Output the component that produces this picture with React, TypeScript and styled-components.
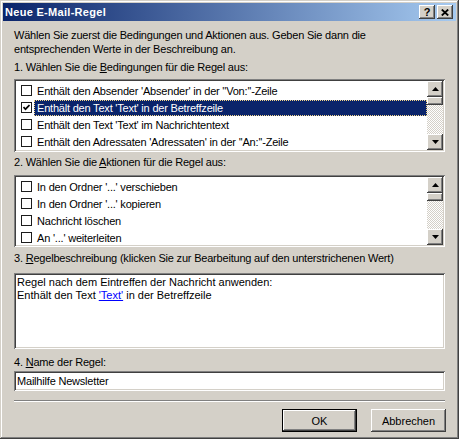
import React from "react";
import styled, { createGlobalStyle } from "styled-components";

const GlobalStyle = createGlobalStyle`
  html, body {
    margin: 0;
    padding: 0;
    background: #d4d0c8;
  }
  body {
    font-family: "Liberation Sans", Arial, sans-serif;
    font-size: 11px;
    color: #000;
  }
`;

const raised = "inset -1px -1px #404040, inset 1px 1px #fff, inset -2px -2px #808080";
const sunken = "inset 1px 1px #808080, inset -1px -1px #fff, inset 2px 2px #404040, inset -2px -2px #d4d0c8";

const WindowStyled = styled.div`
  width: 459px;
  height: 439px;
  box-sizing: border-box;
  padding: 3px;
  background: #d4d0c8;
  box-shadow: inset -1px -1px #404040, inset 1px 1px #d4d0c8, inset -2px -2px #808080, inset 2px 2px #fff;
  display: flex;
  flex-direction: column;
`;

const TitleBar = styled.div`
  height: 18px;
  display: flex;
  align-items: center;
  justify-content: space-between;
  padding: 0 3px 0 2px;
  background: linear-gradient(to right, #0a246a, #a6caf0);
`;

const TitleText = styled.span`
  color: #fff;
  font-weight: bold;
  font-size: 11px;
  letter-spacing: 0.3px;
`;

const CaptionButtons = styled.div`
  display: flex;
  gap: 2px;
`;

const CaptionButton = styled.div`
  width: 16px;
  height: 14px;
  background: #d4d0c8;
  box-shadow: ${raised};
  display: flex;
  align-items: center;
  justify-content: center;
  font-weight: bold;
  font-size: 11px;
  line-height: 14px;
`;

const Body = styled.div`
  display: flex;
  flex-direction: column;
  padding: 0 11px;
  letter-spacing: -0.2px;
`;

const Intro = styled.p`
  margin: 7px 0 0;
  line-height: 14px;
  white-space: nowrap;
`;

const Label = styled.div<{ $mt: number }>`
  margin-top: ${(p) => p.$mt}px;
  line-height: 14px;
  height: 14px;
  white-space: nowrap;
`;

const Mnemonic = styled.span`
  text-decoration: underline;
`;

const ListBox = styled.div<{ $mt: number; $h: number }>`
  margin-top: ${(p) => p.$mt}px;
  height: ${(p) => p.$h}px;
  box-sizing: border-box;
  padding: 2px;
  background: #fff;
  box-shadow: ${sunken};
  display: flex;
  overflow: hidden;
`;

const Items = styled.div`
  flex: 1;
  padding-top: 1px;
  overflow: hidden;
`;

const Row = styled.div`
  height: 17px;
  display: flex;
  align-items: center;
  padding-left: 5px;
  white-space: nowrap;
`;

const CheckBox = styled.span`
  width: 11px;
  height: 11px;
  box-sizing: border-box;
  border: 1px solid #1c1c1c;
  background: #fff;
  display: flex;
  align-items: center;
  justify-content: center;
  flex: none;
`;

const ItemText = styled.span<{ $selected?: boolean }>`
  margin-left: 2px;
  padding: 0 3px;
  height: 16px;
  line-height: 16px;
  box-sizing: border-box;
  flex: ${(p) => (p.$selected ? 1 : "none")};
  background: ${(p) => (p.$selected ? "#0a246a" : "transparent")};
  color: ${(p) => (p.$selected ? "#fff" : "#000")};
  outline: ${(p) => (p.$selected ? "1px dotted #f3d68a" : "none")};
  outline-offset: -1px;
`;

const ScrollBar = styled.div`
  width: 16px;
  display: flex;
  flex-direction: column;
  flex: none;
`;

const ScrollButton = styled.div`
  height: 16px;
  flex: none;
  background: #d4d0c8;
  box-shadow: ${raised};
  display: flex;
  align-items: center;
  justify-content: center;
`;

const Thumb = styled.div`
  height: 8px;
  flex: none;
  background: #d4d0c8;
  box-shadow: ${raised};
`;

const Track = styled.div`
  flex: 1;
  background-color: #d4d0c8;
  background-image: conic-gradient(#fff 25%, #d4d0c8 0 50%, #fff 0 75%, #d4d0c8 0);
  background-size: 2px 2px;
`;

const DescBox = styled.div`
  margin-top: 8px;
  height: 76px;
  box-sizing: border-box;
  padding: 3px 3px;
  background: #fff;
  box-shadow: ${sunken};
  line-height: 13px;
  white-space: nowrap;
  letter-spacing: 0;
`;

const LinkValue = styled.span`
  color: #0000ff;
  text-decoration: underline;
`;

const TextInput = styled.div`
  margin-top: 2px;
  height: 20px;
  box-sizing: border-box;
  padding: 0 3px;
  background: #fff;
  box-shadow: ${sunken};
  line-height: 20px;
`;

const Separator = styled.div`
  margin-top: 9px;
  height: 2px;
  border-top: 1px solid #808080;
  border-bottom: 1px solid #fff;
  box-sizing: border-box;
`;

const ButtonRow = styled.div`
  margin-top: 7px;
  display: flex;
  justify-content: flex-end;
  gap: 14px;
  margin-right: -1px;
`;

const DialogButton = styled.div<{ $default?: boolean }>`
  width: 75px;
  height: 23px;
  background: #d4d0c8;
  display: flex;
  align-items: center;
  justify-content: center;
  letter-spacing: 0;
  box-shadow: ${(p) =>
    p.$default
      ? "inset 0 0 0 1px #000, inset -2px -2px #404040, inset 2px 2px #fff, inset -3px -3px #808080"
      : raised};
`;

const UpArrow = () => (
  <svg width="7" height="4" viewBox="0 0 7 4">
    <path d="M3.5 0 L7 4 L0 4 Z" fill="#000" />
  </svg>
);

const DownArrow = () => (
  <svg width="7" height="4" viewBox="0 0 7 4">
    <path d="M0 0 L7 0 L3.5 4 Z" fill="#000" />
  </svg>
);

const CheckMark = () => (
  <svg width="7" height="7" viewBox="0 0 7 7">
    <polyline points="0.5,3 2.5,5.2 6.5,1" fill="none" stroke="#000" strokeWidth="1.7" />
  </svg>
);

const CloseGlyph = () => (
  <svg width="8" height="7" viewBox="0 0 8 7">
    <path d="M0.8 0.5 L7.2 6.5 M7.2 0.5 L0.8 6.5" stroke="#000" strokeWidth="1.8" />
  </svg>
);

const Scroller: React.FC = () => (
  <ScrollBar>
    <ScrollButton>
      <UpArrow />
    </ScrollButton>
    <Thumb />
    <Track />
    <ScrollButton>
      <DownArrow />
    </ScrollButton>
  </ScrollBar>
);

type Item = { text: string; checked?: boolean; selected?: boolean };

const conditions: Item[] = [
  { text: "Enthält den Absender 'Absender' in der ''Von:''-Zeile" },
  { text: "Enthält den Text 'Text' in der Betreffzeile", checked: true, selected: true },
  { text: "Enthält den Text 'Text' im Nachrichtentext" },
  { text: "Enthält den Adressaten 'Adressaten' in der ''An:''-Zeile" },
];

const actions: Item[] = [
  { text: "In den Ordner '...' verschieben" },
  { text: "In den Ordner '...' kopieren" },
  { text: "Nachricht löschen" },
  { text: "An '...' weiterleiten" },
];

const CheckList: React.FC<{ items: Item[]; mt: number; h: number }> = ({ items, mt, h }) => (
  <ListBox $mt={mt} $h={h}>
    <Items>
      {items.map((item) => (
        <Row key={item.text}>
          <CheckBox>{item.checked && <CheckMark />}</CheckBox>
          <ItemText $selected={item.selected}>{item.text}</ItemText>
        </Row>
      ))}
    </Items>
    <Scroller />
  </ListBox>
);

const App: React.FC = () => (
  <>
    <GlobalStyle />
    <WindowStyled>
      <TitleBar>
        <TitleText>Neue E-Mail-Regel</TitleText>
        <CaptionButtons>
          <CaptionButton>?</CaptionButton>
          <CaptionButton>
            <CloseGlyph />
          </CaptionButton>
        </CaptionButtons>
      </TitleBar>
      <Body>
        <Intro>
          Wählen Sie zuerst die Bedingungen und Aktionen aus. Geben Sie dann die
          <br />
          entsprechenden Werte in der Beschreibung an.
        </Intro>
        <Label $mt={4}>
          1. Wählen Sie die <Mnemonic>B</Mnemonic>edingungen für die Regel aus:
        </Label>
        <CheckList items={conditions} mt={5} h={73} />
        <Label $mt={3}>
          2. Wählen Sie die <Mnemonic>A</Mnemonic>ktionen für die Regel aus:
        </Label>
        <CheckList items={actions} mt={6} h={72} />
        <Label $mt={4}>
          3. <Mnemonic>R</Mnemonic>egelbeschreibung (klicken Sie zur Bearbeitung auf den unterstrichenen Wert)
        </Label>
        <DescBox>
          Regel nach dem Eintreffen der Nachricht anwenden:
          <br />
          Enthält den Text <LinkValue>'Text'</LinkValue> in der Betreffzeile
        </DescBox>
        <Label $mt={6}>
          4. <Mnemonic>N</Mnemonic>ame der Regel:
        </Label>
        <TextInput>Mailhilfe Newsletter</TextInput>
        <Separator />
        <ButtonRow>
          <DialogButton $default>OK</DialogButton>
          <DialogButton>Abbrechen</DialogButton>
        </ButtonRow>
      </Body>
    </WindowStyled>
  </>
);

export default App;
